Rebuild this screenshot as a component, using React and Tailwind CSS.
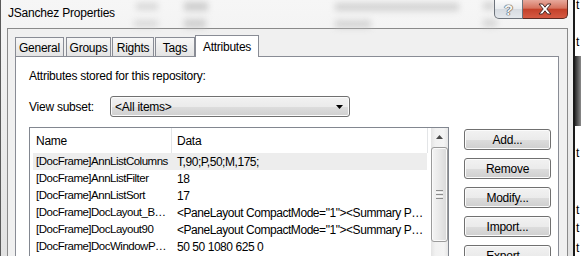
import React from "react";

const tabs = [
  { label: "General", cls: "w-[49px]" },
  { label: "Groups", cls: "ml-[2px] w-[45px]" },
  { label: "Rights", cls: "ml-[1px] w-[42px]" },
  { label: "Tags", cls: "ml-[1px] w-[40px]" },
];

const rows = [
  { name: "[DocFrame]AnnListColumns", data: "T,90;P,50;M,175;", selected: true },
  { name: "[DocFrame]AnnListFilter", data: "18" },
  { name: "[DocFrame]AnnListSort", data: "17" },
  { name: "[DocFrame]DocLayout_B…", data: '<PaneLayout CompactMode="1"><Summary P…' },
  { name: "[DocFrame]DocLayout90", data: '<PaneLayout CompactMode="1"><Summary P…' },
  { name: "[DocFrame]DocWindowP…", data: "50 50 1080 625 0" },
];

const buttons = ["Add...", "Remove", "Modify...", "Import...", "Export..."];

// Win7 style push button
function WinButton({ children }) {
  return (
    <button className="h-[21px] w-[87px] shrink-0 rounded-[3px] border border-[#707070] bg-[linear-gradient(to_bottom,#f2f2f2_0%,#ebebeb_50%,#dddddd_51%,#cfcfcf_100%)] shadow-[inset_0_0_0_1px_#fbfbfb] text-black leading-none">
      {children}
    </button>
  );
}

export default function App() {
  return (
    <div className="w-[581px] h-[256px] overflow-hidden flex bg-white text-[12px] text-black font-['Segoe_UI','Liberation_Sans',sans-serif] tracking-[-0.25px]">
      {/* --- janela --- */}
      <div className="w-[575px] h-full shrink-0 flex flex-col border-l border-l-[#5a5a5a] border-r-2 border-r-[#1a1a1a] bg-[linear-gradient(to_bottom,#f6f6f6,#e2e2e2)]">
        {/* barra de título (vidro com fundo desfocado) */}
        <div className="relative h-[28px] shrink-0 flex items-start">
          <div className="absolute inset-0 overflow-hidden blur-[3px] opacity-60 pointer-events-none">
            <div className="absolute left-[135px] top-[3px] w-[22px] h-[7px] bg-[#c4c4c4]" />
            <div className="absolute left-[183px] top-[2px] w-[24px] h-[9px] bg-[#b4b4b4]" />
            <div className="absolute left-[133px] top-[20px] w-[24px] h-[7px] bg-[#c8c8c8]" />
            <div className="absolute left-[183px] top-[19px] w-[22px] h-[9px] bg-[#b8b8b8]" />
            <div className="absolute left-[334px] top-[3px] w-[124px] h-[8px] bg-[#bcbcbc]" />
            <div className="absolute left-[334px] top-[20px] w-[36px] h-[8px] bg-[#c0c0c0]" />
            <div className="absolute left-[482px] top-[2px] w-[12px] h-[8px] bg-[#c0c0c0]" />
            <div className="absolute left-[482px] top-[19px] w-[14px] h-[8px] bg-[#c4c4c4]" />
          </div>
          <span className="relative ml-[7px] mt-[6px] leading-[15px] tracking-[-0.2px]">JSanchez Properties</span>
          <div className="relative ml-auto mr-[5px] flex">
            <div className="w-[29px] h-[19px] flex items-center justify-center rounded-bl-[5px] border border-t-0 border-[#6d737b] bg-[linear-gradient(to_bottom,#fbfbfb,#e9ecef_50%,#d6dbe1_51%,#e4e8ec)]">
              <span className="text-[15px] font-bold leading-none text-[#f4f4f4] [text-shadow:0_0_1px_#444,0_0_1px_#444,0_0_1px_#444]">?</span>
            </div>
            <div className="w-[45px] h-[19px] flex items-center justify-center rounded-br-[5px] border border-t-0 border-l-0 border-[#5b2a22] bg-[linear-gradient(to_bottom,#e7a99c,#d6735f_45%,#c4412a_52%,#d55a43)]">
              <svg width="14" height="12" viewBox="0 0 14 12">
                <path d="M1 1h3.5L7 4.2 9.5 1H13L8.8 6 13 11H9.5L7 7.8 4.5 11H1l4.2-5z" fill="#ffffff" stroke="#4a2a26" strokeWidth="1" strokeLinejoin="round" />
              </svg>
            </div>
          </div>
        </div>

        {/* área cliente */}
        <div className="ml-[6px] mr-[5px] flex-1 min-h-0 flex flex-col border border-b-0 border-[#8a8a8a] bg-[#f0f0f0] pt-[6px] pl-[7px]">
          {/* abas */}
          <div className="flex items-end h-[21px] shrink-0">
            {tabs.map((tab) => (
              <div
                key={tab.label}
                className={`${tab.cls} h-[19px] flex items-center justify-center border border-b-0 border-[#898c95] bg-[linear-gradient(to_bottom,#f7f7f7,#e4e4e4)] pt-[2px]`}
              >
                {tab.label}
              </div>
            ))}
            <div className="relative z-10 -mb-px w-[64px] h-[22px] flex items-center justify-center border border-b-0 border-[#898c95] bg-white">
              Attributes
            </div>
          </div>

          {/* painel */}
          <div className="w-[544px] flex-1 border border-b-0 border-[#898c95] bg-white pl-[13px] pt-[12px]">
            <p className="leading-[15px]">Attributes stored for this repository:</p>

            <div className="mt-[12px] flex items-center h-[21px]">
              <span className="w-[81px]">View subset:</span>
              <div className="w-[240px] h-[21px] flex items-center rounded-[3px] border border-[#707070] bg-[linear-gradient(to_bottom,#f2f2f2_0%,#ebebeb_50%,#dddddd_51%,#cfcfcf_100%)] shadow-[inset_0_0_0_1px_#fbfbfb] pl-[4px] pr-[6px]">
                <span className="flex-1">&lt;All items&gt;</span>
                <svg width="7" height="4" viewBox="0 0 7 4">
                  <path d="M0 0h7L3.5 4z" fill="#000" />
                </svg>
              </div>
            </div>

            <div className="mt-[10px] flex items-start">
              {/* lista */}
              <div className="w-[420px] h-[200px] shrink-0 flex border border-[#828790] bg-white">
                <div className="w-[401px] flex flex-col">
                  <div className="h-[25px] flex items-center shrink-0">
                    <div className="w-[142px] h-full flex items-center border-r border-[#e3e5e7] pl-[6px]">Name</div>
                    <div className="w-[256px] h-full flex items-center border-r border-[#e3e5e7] pl-[5px]">Data</div>
                  </div>
                  {rows.map((row) => (
                    <div
                      key={row.name}
                      className={`ml-[3px] w-[394px] h-[17px] flex items-center whitespace-nowrap ${row.selected ? "bg-[#ededed]" : ""}`}
                    >
                      <span className="w-[138px] shrink-0 pl-[3px] text-[11.5px] tracking-[-0.5px]">{row.name}</span>
                      <span className="pl-[6px] tracking-[-0.45px]">{row.data}</span>
                    </div>
                  ))}
                </div>

                {/* barra de rolagem */}
                <div className="w-[17px] flex flex-col bg-[linear-gradient(to_right,#e3e3e3,#f1f1f1_25%,#f4f4f4_75%,#e6e6e6)]">
                  <div className="h-[17px] flex items-center justify-center">
                    <svg width="7" height="4" viewBox="0 0 7 4">
                      <path d="M0 4h7L3.5 0z" fill="#4a4a4a" />
                    </svg>
                  </div>
                  <div className="mt-[2px] h-[95px] rounded-[3px] border border-[#9b9b9b] bg-[linear-gradient(to_right,#f4f4f4,#e8e8e8_50%,#d9d9d9)] shadow-[inset_0_0_0_1px_#fafafa] flex flex-col items-center justify-center gap-[1px]">
                    <div className="w-[7px] h-px bg-[#8c8c8c]" />
                    <div className="w-[7px] h-px bg-[#f8f8f8]" />
                    <div className="w-[7px] h-px bg-[#8c8c8c]" />
                    <div className="w-[7px] h-px bg-[#f8f8f8]" />
                    <div className="w-[7px] h-px bg-[#8c8c8c]" />
                  </div>
                </div>
              </div>

              {/* botões */}
              <div className="ml-[15px] mt-[2px] flex flex-col gap-[8px]">
                {buttons.map((b) => (
                  <WinButton key={b}>{b}</WinButton>
                ))}
              </div>
            </div>
          </div>
        </div>
      </div>

      {/* fundo atrás da janela */}
      <div className="flex-1 flex flex-col overflow-hidden bg-white text-[12px] leading-[15px]">
        <span className="mt-[-2px] pl-[1px]">t</span>
        <span className="mt-[22px] pl-[1px]">t</span>
        <div className="mt-[6px] h-[70px] bg-[linear-gradient(to_right,#2a2a2a,#8a8a8a)]" />
        <span className="mt-[20px] pl-[1px]">t</span>
        <span className="mt-[42px] pl-[1px]">t</span>
        <span className="mt-[3px] pl-[1px]">t</span>
        <span className="mt-[5px] pl-[1px]">t</span>
      </div>
    </div>
  );
}
